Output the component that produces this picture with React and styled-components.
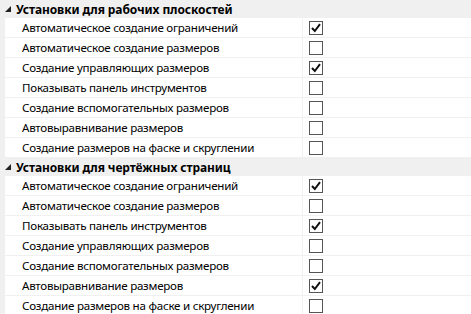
import React from 'react';
import styled, { createGlobalStyle } from 'styled-components';

const Global = createGlobalStyle`
  html, body { margin: 0; padding: 0; background: #fff; }
  body { font-family: "Noto Sans", "Open Sans", sans-serif; }
`;

const Grid = styled.div`
  width: 471px;
  background: #f0f0f0;
`;

const Header = styled.div`
  height: 18px;
  display: flex;
  align-items: center;
  background: #f0f0f0;
  font-size: 12px;
  font-weight: 700;
  letter-spacing: -0.1px;
  color: #000;
`;

const Arrow = styled.span`
  width: 16px;
  display: flex;
  justify-content: center;
  svg { display: block; }
`;

const Row = styled.div`
  margin-left: 5px;
  height: 19px;
  display: grid;
  grid-template-columns: 298px 1fr;
  background: #fff;
  border-bottom: 1px solid #f0f0f0;
`;

const Label = styled.div`
  padding-left: 17px;
  display: flex;
  align-items: center;
  font-size: 11.6px;
  letter-spacing: -0.25px;
  color: #000;
  white-space: nowrap;
  overflow: hidden;
  border-right: 1px solid #f0f0f0;
`;

const Cell = styled.div`
  display: flex;
  align-items: center;
  padding-left: 6px;
`;

const Box = styled.span`
  width: 12px;
  height: 12px;
  border: 1px solid #555;
  background: #fff;
  display: flex;
  align-items: center;
  justify-content: center;
  svg { display: block; }
`;

const sections = [
  {
    title: 'Установки для рабочих плоскостей',
    items: [
      ['Автоматическое создание ограничений', true],
      ['Автоматическое создание размеров', false],
      ['Создание управляющих размеров', true],
      ['Показывать панель инструментов', false],
      ['Создание вспомогательных размеров', false],
      ['Автовыравнивание размеров', false],
      ['Создание размеров на фаске и скруглении', false],
    ],
  },
  {
    title: 'Установки для чертёжных страниц',
    items: [
      ['Автоматическое создание ограничений', true],
      ['Автоматическое создание размеров', false],
      ['Показывать панель инструментов', true],
      ['Создание управляющих размеров', false],
      ['Создание вспомогательных размеров', false],
      ['Автовыравнивание размеров', true],
      ['Создание размеров на фаске и скруглении', false],
    ],
  },
];

const Check = () => (
  <svg width="10" height="10" viewBox="0 0 10 10">
    <path d="M1 5 L3.8 8 L9 1.2" fill="none" stroke="#111" strokeWidth="2" />
  </svg>
);

export default function App() {
  return (
    <Grid>
      <Global />
      {sections.map((s) => (
        <React.Fragment key={s.title}>
          <Header>
            <Arrow>
              <svg width="6" height="6" viewBox="0 0 6 6">
                <path d="M6 0 L6 6 L0 6 Z" fill="#222" />
              </svg>
            </Arrow>
            {s.title}
          </Header>
          {s.items.map(([label, on], i) => (
            <Row key={i}>
              <Label>{label}</Label>
              <Cell>
                <Box>{on && <Check />}</Box>
              </Cell>
            </Row>
          ))}
        </React.Fragment>
      ))}
    </Grid>
  );
}
